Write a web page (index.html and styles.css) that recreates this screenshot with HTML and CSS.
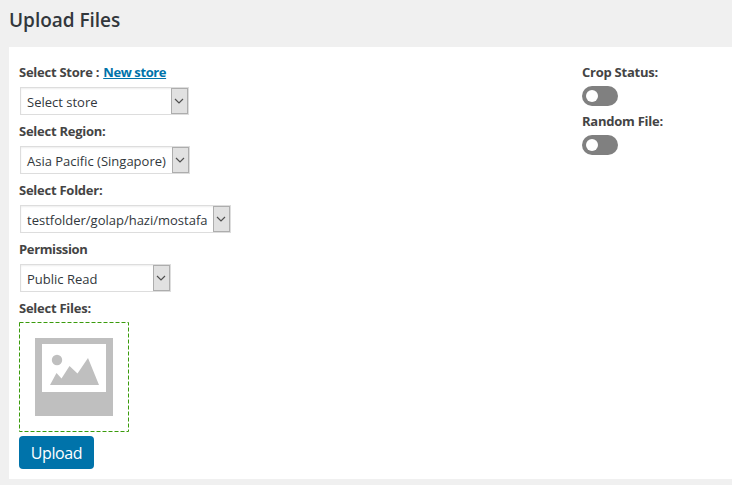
FILE: index.html
```
<!DOCTYPE html>
<html lang="en">
<head>
<meta charset="utf-8">
<title>Upload Files</title>
<link rel="stylesheet" href="styles.css">
</head>
<body>
<h1>Upload Files</h1>
<main class="panel">
  <form class="fields">
    <div class="field">
      <div class="label"><span>Select Store :</span><a class="new-store" href="#">New store</a></div>
      <div class="select w-store"><span>Select store</span><i class="arrow"><svg viewBox="0 0 10 6"><path d="M1 1l4 4 4-4"/></svg></i></div>
    </div>
    <div class="field">
      <div class="label"><span>Select Region:</span></div>
      <div class="select w-region"><span>Asia Pacific (Singapore)</span><i class="arrow"><svg viewBox="0 0 10 6"><path d="M1 1l4 4 4-4"/></svg></i></div>
    </div>
    <div class="field">
      <div class="label"><span>Select Folder:</span></div>
      <div class="select w-folder"><span>testfolder/golap/hazi/mostafa</span><i class="arrow"><svg viewBox="0 0 10 6"><path d="M1 1l4 4 4-4"/></svg></i></div>
    </div>
    <div class="field">
      <div class="label"><span class="permission">Permission</span></div>
      <div class="select w-permission"><span>Public Read</span><i class="arrow"><svg viewBox="0 0 10 6"><path d="M1 1l4 4 4-4"/></svg></i></div>
    </div>
    <div class="label files"><span>Select Files:</span></div>
    <svg class="dropzone" viewBox="0 0 110 110">
      <rect class="dash" x=".5" y=".5" width="109" height="109"/>
      <path class="frame" fill-rule="evenodd" d="M16 16h78v78H16zM23 22v48h64V22z"/>
      <circle class="frame" cx="38" cy="38" r="5.2"/>
      <path class="frame" d="M31 63l6.500-12 5 5.500L50.500 44l8 7.500L69 36l11 27z"/>
    </svg>
    <button class="upload" type="button">Upload</button>
  </form>
  <aside class="options">
    <div class="label"><span>Crop Status:</span></div>
    <div class="toggle"></div>
    <div class="label"><span>Random File:</span></div>
    <div class="toggle"></div>
  </aside>
</main>
</body>
</html>
```
FILE: styles.css
```
* { box-sizing: border-box; }
body {
  margin: 0;
  height: 485px;
  overflow: hidden;
  background: #f0f0f0;
  color: #444;
  font: 13px/20px "Open Sans", "Noto Sans", sans-serif;
}
h1 {
  margin: 0;
  height: 47px;
  padding: 5px 0 0 9px;
  color: #32373c;
  font-size: 19px;
  font-weight: 600;
  line-height: 30px;
  letter-spacing: -.03px;
}
.panel {
  display: flex;
  height: 432px;
  margin-left: 9px;
  padding: 15px 0 0 10px;
  background: #fff;
}
.fields { width: 563px; }
.field { height: 59px; }
.label {
  display: flex;
  height: 25px;
  font-weight: 700;
  white-space: nowrap;
  letter-spacing: -.25px;
}
.label.files { height: 24px; }
.permission { letter-spacing: -.35px; }
.new-store { margin-left: 4px; color: #0073aa; letter-spacing: -.4px; }
.select {
  display: flex;
  justify-content: space-between;
  height: 28px;
  margin-left: 1px;
  padding-left: 6px;
  border: 1px solid #ddd;
  box-shadow: inset 0 1px 2px rgba(0, 0, 0, .07);
  color: #32373c;
  line-height: 28px;
  white-space: nowrap;
}
.w-store { width: 169px; }
.w-region { width: 170px; }
.w-folder { width: 211px; }
.w-permission { width: 151px; }
.arrow {
  display: grid;
  place-items: center;
  flex: none;
  width: 17px;
  height: 26px;
  padding-right: 1px;
  border: 1px solid #adadad;
  background: #e1e1e1;
}
.arrow svg { width: 10px; height: 6px; }
.arrow path { fill: none; stroke: #505050; stroke-width: 1.2; }
.dropzone { display: block; width: 110px; height: 110px; margin-bottom: 4px; }
.dash { fill: none; stroke: #3a9b0c; stroke-dasharray: 4 2; }
.frame { fill: #bfbfbf; }
.upload {
  display: block;
  width: 75px;
  height: 33px;
  padding: 0;
  border: 0;
  border-radius: 4px;
  background: #0073aa;
  color: #fff;
  font: 16px/34px "Open Sans", sans-serif;
  letter-spacing: -.4px;
}
.options .label { height: 24px; }
.toggle {
  width: 36px;
  height: 20px;
  margin-bottom: 5px;
  padding: 4px;
  border-radius: 10px;
  background: #808080;
}
.toggle::before {
  content: "";
  display: block;
  width: 12px;
  height: 12px;
  border-radius: 50%;
  background: #fff;
}
```
